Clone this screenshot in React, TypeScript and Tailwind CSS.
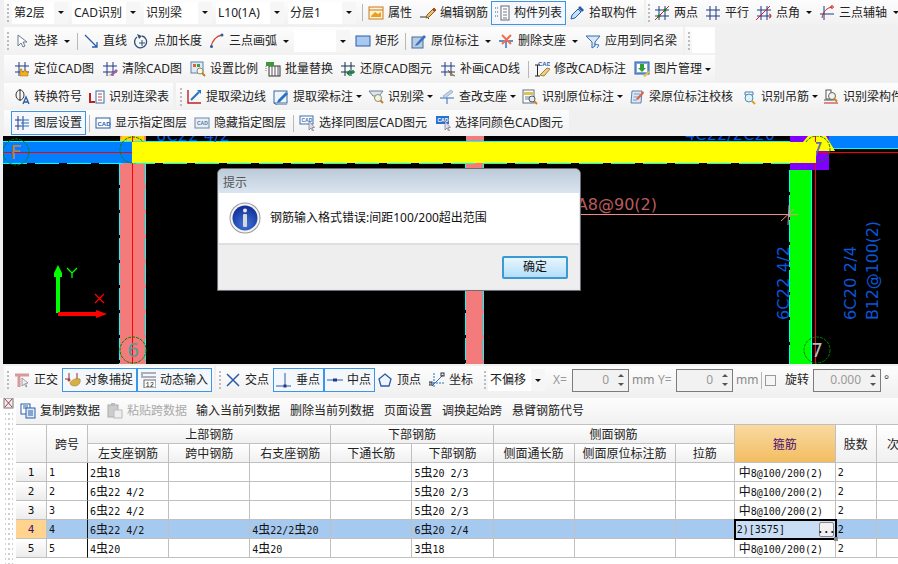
import type { ReactNode } from "react"

const NAVY = "#1f3a8a"

function Hash({ c = NAVY }: { c?: string }) {
  return <path d="M5 1v14M11 1v14M1 5h14M1 11h14" stroke={c} fill="none" />
}

const icons: Record<string, ReactNode> = {
  attr: (<><rect x="1" y="2" width="14" height="12" fill="#fff3d0" stroke="#c87a20" /><path d="M1 5h14" stroke="#c87a20" /><path d="M3 11l4-4 3 2 3-2v5H3z" fill="#e8a020" /></>),
  edit: (<><path d="M0 12h7l2 2" stroke="#333" fill="none" /><path d="M7 10l7-7 2 2-7 7-3 1z" fill="#e8c070" stroke="#8a6020" /><path d="M13 4l2 2" stroke="#c03020" strokeWidth="2" /></>),
  list: (<><rect x="7" y="1" width="8" height="14" fill="#fff" stroke="#667" /><path d="M9 4h4M9 7h4M9 10h4M9 13h4" stroke="#778" /><path d="M1 3h3M1 7h3M1 11h3" stroke="#556" strokeDasharray="1 1" /></>),
  dropper: (<><path d="M2 14l1-4 6-6 3 3-6 6z" fill="#bfe0f8" stroke="#2a5ca8" /><path d="M9 3l2-2 4 4-2 2z" fill="#2a5ca8" /></>),
  twoPt: (<><Hash /><path d="M1 15L15 1" stroke="#c02020" /><circle cx="5" cy="11" r="1.5" fill="#108010" /><circle cx="11" cy="5" r="1.5" fill="#108010" /></>),
  parallel: <Hash />,
  angle: (<><Hash /><path d="M0 15L14 1" stroke="#d02020" /><path d="M13 9a2 2 0 1 1 0 4" stroke="#d02020" fill="none" /></>),
  arc3: (<><path d="M5 1v14M1 9h14" stroke={NAVY} /><path d="M3 13C4 6 8 3 13 2" stroke="#d02020" fill="none" /><circle cx="13" cy="2" r="1.3" fill="none" stroke="#d02020" /></>),
  cursor: <path d="M4 2v11l3-3 2 4 2-1-2-4h4z" fill="#fff" stroke="#6a7a90" />,
  line: <path d="M2 2l12 12M14 9v5H9" stroke="#2a5ca8" fill="none" strokeWidth="1.3" />,
  ptLen: (<><path d="M3 4a6 6 0 1 0 5-1" stroke="#30507a" fill="none" strokeWidth="1.3" /><path d="M8 7v6M5 10h6" stroke="#30507a" /><path d="M3 1l5 2-3 3z" fill="#30507a" /></>),
  arc: (<><path d="M2 14C3 8 7 3 13 2" stroke="#d04030" fill="none" strokeWidth="1.4" /><circle cx="2.5" cy="13.5" r="1.5" fill="#2a5ca8" /><circle cx="13" cy="2" r="1.5" fill="#2a5ca8" /></>),
  rect: <rect x="1" y="3" width="14" height="10" fill="#a8c8f0" stroke="#2a5ca8" />,
  orig: (<><rect x="1" y="4" width="11" height="11" fill="#b8cce4" stroke="#4a6a9a" /><path d="M5 11l8-9 2 2-8 8-3 1z" fill="#3a70c0" /></>),
  del: (<><path d="M1 8h14M8 8v7" stroke="#2a6cc0" strokeWidth="1.4" /><path d="M4 2l9 9M13 2l-9 9" stroke="#f07050" strokeWidth="2" /></>),
  apply: (<><path d="M1 3h14l-5 6v4l-3 2V9z" fill="#d8e8f8" stroke="#3a6aa8" /><path d="M9 11l5 1-2 3" stroke="#2a80d0" fill="none" /></>),
  locate: (<><Hash /><path d="M6 15V8h2v3h2v-2h2v2h2v4z" fill="#f0b020" stroke="#a07010" strokeWidth=".5" /></>),
  clear: (<><Hash /><path d="M8 14l6-6 2 2-6 5z" fill="#a060a0" /><path d="M6 15l2-2 1 1z" fill="#e0b040" /></>),
  scale: (<><rect x="1" y="1" width="12" height="11" fill="#dfeaf8" stroke="#6080a8" /><rect x="3" y="3" width="3" height="3" fill="#e06030" /><rect x="7" y="3" width="3" height="3" fill="#40a040" /><circle cx="10" cy="10" r="3" fill="#fff8d0" stroke="#888" /><path d="M12 12l3 3" stroke="#c08020" strokeWidth="2" /></>),
  batch: (<><rect x="4" y="5" width="11" height="10" fill="#fff" stroke="#333" /><path d="M7 5v10M10 5v10M13 5v10" stroke="#555" /><rect x="1" y="1" width="8" height="4" fill="#3a9a3a" /><path d="M1 5v6" stroke="#777" strokeDasharray="1 1" /></>),
  restore: (<><Hash c="#10304a" /><path d="M7 12h6v-3M7 12l3-2.5M7 12l3 2.5" stroke="#108030" fill="none" strokeWidth="1.4" /></>),
  patch: (<><Hash /><path d="M8 9l3 3 4 3-4-1z" fill="#d0a040" stroke="#604010" strokeWidth=".5" /></>),
  modCad: (<><path d="M1 4h5M3.5 4v11M1 15h5" stroke="#222" /><text x="4" y="5" fontSize="6" fontWeight="700" fill="#2a5ca8" fontFamily="Liberation Sans">CAD</text><path d="M6 14l7-7 3 1-6 7z" fill="#f0d080" stroke="#a08030" /></>),
  image: (<><rect x="1" y="1" width="14" height="12" fill="#7aa8e0" stroke="#2a5ca8" /><rect x="3" y="3" width="10" height="8" fill="#fff" /><path d="M6 3h4v4h2l-4 4-4-4h2z" fill="#30a030" /><path d="M9 15l5-5 2 1-5 5z" fill="#e8c040" /></>),
  convert: (<><ellipse cx="6" cy="6" rx="4" ry="5" fill="none" stroke="#333" /><path d="M6 0v12" stroke="#333" /><path d="M9 15l3-7 3 7M10 13h4" stroke="#2a5ca8" fill="none" strokeWidth="1.3" /></>),
  lian: (<><path d="M1 4v9h5" stroke="#c02020" fill="none" strokeWidth="2" /><rect x="7" y="2" width="8" height="12" fill="#fff" stroke="#3a6aa8" /><path d="M9 5h4M9 8h4M9 11h4" stroke="#c04040" /></>),
  edge: (<><path d="M2 1v13h13" stroke="#c02020" fill="none" strokeWidth="1.4" /><path d="M5 11L13 3" stroke="#2a70c0" strokeWidth="2" /><path d="M11 1h4v4z" fill="#2a70c0" /></>),
  mark: (<><rect x="1" y="2" width="13" height="12" fill="#eef4fb" stroke="#406a9a" /><path d="M1 14l3 2h10" stroke="#406a9a" fill="none" /><path d="M5 11l8-8 2 2-8 8-3 1z" fill="#2a70c0" /></>),
  beam: (<><path d="M1 2h14l-4 5H5z" fill="#dce4ec" stroke="#708090" /><circle cx="10" cy="9" r="3.5" fill="#f8f4d8" stroke="#888" /><path d="M12.5 11.5L15 14" stroke="#c08020" strokeWidth="2" /></>),
  check: (<><path d="M1 9h14M8 9v6" stroke="#2a6cc0" /><path d="M4 7l8-6 2 2-8 6z" fill="#c8d4e4" stroke="#6080a0" strokeWidth=".5" /></>),
  origin: (<><rect x="1" y="1" width="11" height="13" fill="#fff" stroke="#607080" /><path d="M2 3h9v3H2z" fill="#e0c050" /><path d="M3 8h6M3 10h5" stroke="#6080a0" /><circle cx="10" cy="10" r="3" fill="#dcecf8" stroke="#555" /><path d="M12 12l3 3" stroke="#d08020" strokeWidth="2" /></>),
  verify: (<><path d="M3 2h10l-1 12H2z" fill="#dce8f4" stroke="#5a80b0" /><path d="M5 5h6M4.500 8h6M4 11h4" stroke="#7a9ac0" /><path d="M7 10l7-8 1 2-6 7z" fill="#e06040" /></>),
  hanger: (<><path d="M4 3h8v3H4z" fill="none" stroke="#4a7ab0" /><circle cx="8" cy="9" r="4" fill="#dff0f8" stroke="#4a90b0" /><path d="M11 12l3 3" stroke="#e0a020" strokeWidth="2" /></>),
  beamPart: (<><path d="M1 14h14" stroke="#c02020" /><path d="M1 11h10" stroke="#555" /><rect x="3" y="1" width="5" height="9" fill="#fff" stroke="#555" /><circle cx="9" cy="7" r="3.500" fill="#f4f4e4" stroke="#666" /><path d="M11 9.500l3 3" stroke="#c08020" strokeWidth="2" /></>),
  layer: (<><path d="M4 1v14M9 1v14" stroke={NAVY} /><path d="M1 5h6M1 11h6" stroke={NAVY} /><path d="M7 5h8M7 8h8M7 11h8" stroke="#2a70c0" /></>),
  showCad: (<><rect x="1" y="3" width="14" height="10" fill="#fff" stroke="#2a5ca8" /><text x="2.500" y="10.500" fontSize="6" fontWeight="700" fill="#2a5ca8" fontFamily="Liberation Sans">CAD</text></>),
  hideCad: (<><rect x="1" y="3" width="14" height="10" fill="#e8eef6" stroke="#6a8ab0" /><text x="3" y="10" fontSize="5" fontWeight="700" fill="#5a7aa0" fontFamily="Liberation Sans">CAD</text></>),
  selCad: (<><rect x="1" y="1" width="13" height="8" fill="#fff" stroke="#3a70b0" /><text x="2.500" y="7" fontSize="5" fontWeight="700" fill="#3a70b0" fontFamily="Liberation Sans">CAD</text><path d="M10 6v9l2-2 1.500 3 1-.5-1.500-3h2.500z" fill="#dde" stroke="#667" strokeWidth=".6" /></>),
  selColor: (<><rect x="1" y="1" width="13" height="8" fill="#2a70d0" /><text x="2.500" y="7" fontSize="5" fontWeight="700" fill="#fff" fontFamily="Liberation Sans">CAD</text><path d="M10 6v9l2-2 1.500 3 1-.5-1.500-3h2.500z" fill="#dde" stroke="#667" strokeWidth=".6" /></>),
  ortho: (<><path d="M1 3h14M5 3v12" stroke="#d89a98" strokeWidth="3" /><path d="M8 6l6 5-2.500.5 1.500 3-1 .5-1.500-3L8 14z" fill="#eee" stroke="#667" strokeWidth=".6" /></>),
  snap: (<><path d="M0 7h5M4 1v7M12 1v7" stroke="#8a3030" /><circle cx="4" cy="8" r="1.500" fill="#c04030" /><path d="M5 11c2-4 7-5 10-4 1 3-1 7-5 7-3 0-5-1-5-3z" fill="#d8b040" stroke="#907020" strokeWidth=".5" /></>),
  dyn: (<><path d="M1 1h15M1 5h15" stroke="#667" /><path d="M1 3h2" stroke="#667" /><rect x="4" y="8" width="12" height="8" fill="#fff" stroke="#667" /><text x="5.500" y="15" fontSize="7" fill="#222" fontFamily="Liberation Mono">12</text></>),
  cross: <path d="M2 2l12 12M14 2L2 14" stroke="#2a5ca8" strokeWidth="1.500" />,
  perp: (<><path d="M0 14h15M9 1v13" stroke="#2a5ca8" /><rect x="7.500" y="12.500" width="3" height="3" fill="#1f3a8a" /></>),
  mid: (<><path d="M0 8h16" stroke="#2a5ca8" /><rect x="6" y="6.500" width="4" height="3" fill="#1f3a8a" /></>),
  vertex: <path d="M8 2l6 5-2 7H4L2 7z" fill="#eef4fb" stroke="#2a5ca8" strokeWidth="1.300" />,
  coord: (<><path d="M5 1v14M1 11h14" stroke="#2a70c0" strokeDasharray="2 1" /><path d="M3 14L14 3" stroke="#2a70c0" /><rect x="0" y="10" width="3" height="3" fill="none" stroke="#333" /><rect x="12" y="1" width="3" height="3" fill="none" stroke="#333" /></>),
  copy: (<><rect x="1" y="1" width="9" height="10" fill="#fff" stroke="#2a5ca8" /><path d="M3 3h5M3 5h5" stroke="#2a5ca8" /><rect x="6" y="5" width="9" height="10" fill="#dfeaf8" stroke="#2a5ca8" /><path d="M8 8h5M8 10h5M8 12h5" stroke="#2a5ca8" /></>),
  paste: (<><rect x="1" y="2" width="10" height="12" fill="#ccc" stroke="#aaa" /><rect x="4" y="0" width="4" height="3" fill="#bbb" /><rect x="7" y="7" width="8" height="8" fill="#eee" stroke="#bbb" /></>),
}

function Icon({ name }: { name: string }) {
  return (
    <svg width="16" height="16" viewBox="0 0 16 16" className="shrink-0">
      {icons[name]}
    </svg>
  )
}

function Arrow({ className = "" }: { className?: string }) {
  return <span className={`inline-block shrink-0 border-x-[3px] border-t-[3px] border-x-transparent border-t-[#111] ${className}`} />
}

function Grip({ className = "" }: { className?: string }) {
  return (
    <div className={`flex w-[2px] shrink-0 flex-col gap-[2px] ${className}`}>
      <span className="h-[2px] bg-[#bcbcbc]" />
      <span className="h-[2px] bg-[#bcbcbc]" />
      <span className="h-[2px] bg-[#bcbcbc]" />
      <span className="h-[2px] bg-[#bcbcbc]" />
      <span className="h-[2px] bg-[#bcbcbc]" />
    </div>
  )
}

function Sep({ className = "" }: { className?: string }) {
  return <div className={`h-[17px] w-px shrink-0 bg-[#b8b8b8] ${className}`} />
}

function Tool(props: { icon: string; label: string; className: string; arrow?: "near" | "far"; on?: boolean }) {
  const on = props.on ? "h-[24px] border border-[#3d95e6] bg-[#f4f8fc] pl-[2px]" : ""
  return (
    <div className={`flex shrink-0 items-center gap-[4px] whitespace-nowrap ${on} ${props.className}`}>
      <Icon name={props.icon} />
      <span>{props.label}</span>
      {props.arrow === "near" && <Arrow className="ml-[-1px]" />}
      {props.arrow === "far" && <Arrow className="ml-[2px]" />}
    </div>
  )
}

function Combo({ label, className }: { label: string; className: string }) {
  return (
    <div className={`flex h-[22px] shrink-0 items-center justify-between bg-white pl-[2px] ${className}`}>
      <span className="whitespace-nowrap">{label}</span>
      <span className="flex h-full w-[14px] items-center justify-center bg-[#f6f6f6]">
        <Arrow />
      </span>
    </div>
  )
}

function Spin({ value, className }: { value: string; className: string }) {
  return (
    <div className={`flex h-[23px] shrink-0 items-center justify-end border border-[#7c7c7c] bg-[#f2f2f2] text-[#9a9a9a] ${className}`}>
      <span>{value}</span>
      <span className="ml-[9px] mr-[4px] flex w-[6px] flex-col items-center gap-[6px]">
        <span className="border-x-[3px] border-b-[3px] border-x-transparent border-b-[#555]" />
        <span className="border-x-[3px] border-t-[3px] border-x-transparent border-t-[#555]" />
      </span>
    </div>
  )
}

const strip = "bg-gradient-to-b from-[#fdfdfd] to-[#f1f1f1]"

function Toolbars() {
  return (
    <div className="text-[12px] leading-[16px] text-[#222]">
      <div className="flex h-[27px] pl-[4px]">
        <div className={`flex h-[25px] w-[640px] shrink-0 items-center pl-[3px] ${strip}`}>
          <Grip />
          <Combo label="第2层" className="ml-[3px] w-[56px]" />
          <Combo label="CAD识别" className="ml-[4px] w-[68px]" />
          <Combo label="识别梁" className="ml-[4px] w-[68px]" />
          <Combo label="L10(1A)" className="ml-[4px] w-[68px]" />
          <Combo label="分层1" className="ml-[4px] w-[68px]" />
          <Sep className="ml-[6px]" />
          <Tool icon="attr" label="属性" className="ml-[5px] w-[52px]" />
          <Tool icon="edit" label="编辑钢筋" className="w-[71px]" />
          <Tool icon="list" label="构件列表" className="w-[75px]" on />
          <Tool icon="dropper" label="拾取构件" className="ml-[3px] w-[70px]" />
        </div>
        <div className={`ml-[2px] flex h-[25px] flex-1 items-center overflow-hidden pl-[2px] ${strip}`}>
          <Grip />
          <Tool icon="twoPt" label="两点" className="ml-[4px] w-[51px]" />
          <Tool icon="parallel" label="平行" className="w-[51px]" />
          <Tool icon="angle" label="点角" className="w-[63px]" arrow="far" />
          <Tool icon="arc3" label="三点辅轴" className="w-[79px]" arrow="far" />
        </div>
      </div>

      <div className="flex h-[28px] pl-[4px]">
        <div className={`flex w-[679px] shrink-0 items-center pl-[3px] ${strip}`}>
          <Grip />
          <Tool icon="cursor" label="选择" className="ml-[5px] w-[63px]" arrow="far" />
          <Sep />
          <Tool icon="line" label="直线" className="ml-[5px] w-[51px]" />
          <Tool icon="ptLen" label="点加长度" className="w-[75px]" />
          <Tool icon="arc" label="三点画弧" className="w-[85px]" arrow="far" />
          <Combo label="" className="w-[56px]" />
          <Tool icon="rect" label="矩形" className="ml-[5px] w-[50px]" />
          <Sep />
          <Tool icon="orig" label="原位标注" className="ml-[5px] w-[87px]" arrow="far" />
          <Tool icon="del" label="删除支座" className="w-[87px]" arrow="far" />
          <Tool icon="apply" label="应用到同名梁" className="w-[93px]" />
        </div>
        <div className={`ml-[2px] flex w-[30px] items-center pl-[3px] ${strip}`}>
          <Grip />
          <div className="ml-[2px] h-[24px] flex-1 bg-white" />
        </div>
      </div>

      <div className="flex h-[28px] pl-[4px]">
        <div className={`flex w-[711px] shrink-0 items-center pl-[10px] ${strip}`}>
          <Tool icon="locate" label="定位CAD图" className="w-[88px]" />
          <Tool icon="clear" label="清除CAD图" className="w-[88px]" />
          <Tool icon="scale" label="设置比例" className="w-[75px]" />
          <Tool icon="batch" label="批量替换" className="w-[75px]" />
          <Tool icon="restore" label="还原CAD图元" className="w-[100px]" />
          <Tool icon="patch" label="补画CAD线" className="w-[88px]" />
          <Sep />
          <Tool icon="modCad" label="修改CAD标注" className="ml-[5px] w-[100px]" />
          <Tool icon="image" label="图片管理" className="w-[80px]" arrow="near" />
        </div>
      </div>

      <div className="flex h-[27px] pl-[4px]">
        <div className={`flex w-[169px] shrink-0 items-center pl-[10px] ${strip}`}>
          <Tool icon="convert" label="转换符号" className="w-[75px]" />
          <Tool icon="lian" label="识别连梁表" className="w-[84px]" />
        </div>
        <div className={`ml-[3px] flex flex-1 items-center overflow-hidden pl-[4px] ${strip}`}>
          <Grip />
          <Tool icon="edge" label="提取梁边线" className="ml-[4px] w-[87px]" />
          <Tool icon="mark" label="提取梁标注" className="w-[95px]" arrow="near" />
          <Tool icon="beam" label="识别梁" className="w-[71px]" arrow="near" />
          <Tool icon="check" label="查改支座" className="w-[83px]" arrow="near" />
          <Tool icon="origin" label="识别原位标注" className="w-[107px]" arrow="near" />
          <Tool icon="verify" label="梁原位标注校核" className="w-[112px]" />
          <Tool icon="hanger" label="识别吊筋" className="w-[82px]" arrow="near" />
          <Tool icon="beamPart" label="识别梁构件" className="w-[80px]" />
        </div>
      </div>

      <div className="flex h-[26px] pl-[4px]">
        <div className={`flex w-[565px] shrink-0 items-center pl-[7px] ${strip}`}>
          <Tool icon="layer" label="图层设置" className="w-[75px]" on />
          <Sep className="ml-[3px]" />
          <Tool icon="showCad" label="显示指定图层" className="ml-[5px] w-[99px]" />
          <Tool icon="hideCad" label="隐藏指定图层" className="w-[99px]" />
          <Sep />
          <Tool icon="selCad" label="选择同图层CAD图元" className="ml-[5px] w-[136px]" />
          <Tool icon="selColor" label="选择同颜色CAD图元" className="w-[130px]" />
        </div>
      </div>
    </div>
  )
}

function InfoIcon() {
  return (
    <svg width="32" height="32" viewBox="0 0 32 32">
      <defs>
        <radialGradient id="infoBlue" cx="50%" cy="75%" r="70%">
          <stop offset="0" stopColor="#3f74d8" />
          <stop offset="1" stopColor="#12309a" />
        </radialGradient>
      </defs>
      <circle cx="16" cy="16" r="15.500" fill="#9a9a9a" />
      <circle cx="16" cy="16" r="14.500" fill="#f4f4f4" />
      <circle cx="16" cy="16" r="12.500" fill="url(#infoBlue)" />
      <circle cx="16" cy="8.500" r="2" fill="#e8e8e8" />
      <rect x="14" y="12" width="4" height="13" rx="1" fill="#d8d8d8" />
    </svg>
  )
}

function Dialog() {
  return (
    <div className="absolute left-[214px] top-[32px] w-[364px] rounded-t-[6px] border border-[#6f6f6f] bg-[#e3e9f2] text-[12px] leading-[16px]">
      <div className="flex h-[24px] items-center rounded-t-[5px] bg-gradient-to-b from-[#bccad9] to-[#dae5f0] pl-[5px] pt-[3px] text-[#555]">提示</div>
      <div className="mx-[1px] flex h-[52px] items-center border-b-2 border-[#dfdfdf] bg-white pl-[10px] text-[#111]">
        <InfoIcon />
        <span className="ml-[9px]">钢筋输入格式错误:间距100/200超出范围</span>
      </div>
      <div className="mx-[1px] mb-[1px] flex h-[44px] items-center justify-end bg-[#eeeeee] pr-[11px]">
        <div className="flex h-[23px] w-[66px] items-center justify-center rounded-[2px] border-2 border-[#3a9ad4] bg-gradient-to-b from-[#e8f6fd] to-[#b5defa] text-[#111]">确定</div>
      </div>
    </div>
  )
}

function AxisBubble({ x, y, label, color }: { x: number; y: number; label: string; color: string }) {
  return (
    <>
      <circle cx={x} cy={y} r="13" fill="none" stroke="#008000" strokeDasharray="3 1" />
      <text x={x} y={y + 7} textAnchor="middle" fontSize="19" fill={color} fontFamily="DejaVu Sans">{label}</text>
    </>
  )
}

function Drawing() {
  const cyan = "#00ffff"
  return (
    <svg width="895" height="228" viewBox="3 136 895 228" className="block">
      <rect x="3" y="136" width="895" height="228" fill="#000" />
      {/* beams and columns */}
      <rect x="120" y="136" width="26" height="228" fill="#f47b7b" />
      <rect x="466" y="136" width="18" height="228" fill="#f47b7b" />
      <path d="M119.500 163v201M145.500 163v201M465.500 163v201M483.500 163v201" stroke={cyan} strokeDasharray="22 3" />
      <path d="M115 152l7-16h22l2 16z" fill="#ffd200" />
      <rect x="3" y="141" width="129" height="22" fill="#0080ff" />
      <rect x="132" y="142" width="684" height="21" fill="#ffff00" />
      <path d="M3 141.500h129M132 141.500h684M829 148.500h69" stroke={cyan} />
      <path d="M3 163.500h810" stroke={cyan} strokeDasharray="24 8" />
      <rect x="790" y="136" width="39" height="34" fill="#8000ff" />
      <rect x="790" y="142" width="26" height="21" fill="#ffff00" />
      <rect x="829" y="136" width="69" height="12" fill="#0080ff" />
      <path d="M803 142l5-6h18l9 15h-19v-9z" fill="#ffff00" />
      <rect x="790" y="170" width="21" height="194" fill="#00ff00" />
      <path d="M789.500 170v194" stroke={cyan} strokeDasharray="22 3" />
      <path d="M811.500 170v194" stroke={cyan} />
      {/* grid lines */}
      <path d="M3 152.500h129M132.500 136v228M815.500 136v228M816 152.500h82" stroke="#ff0000" />
      <path d="M560 214.500h238M789 205l-1 20M781 221l13-12" stroke="#f08a8a" />
      <AxisBubble x={16} y={152} label="F" color="#c08048" />
      <AxisBubble x={133} y={150} label="" color="#888" />
      <AxisBubble x={133} y={350} label="6" color="#5a9a9a" />
      <AxisBubble x={817} y={149} label="7" color="#6a6aaa" />
      <AxisBubble x={817} y={350} label="7" color="#b8b8b8" />
      {/* annotations */}
      <g fontFamily="DejaVu Sans" fontSize="16" fill="#0a55d8">
        <text x="156" y="141" textLength="74">6C22 4/2</text>
        <text x="685" y="140" textLength="90">4C22/2C20</text>
        <text transform="translate(789 320) rotate(-90)" textLength="74">6C22 4/2</text>
        <text transform="translate(856 320) rotate(-90)" textLength="74">6C20 2/4</text>
        <text transform="translate(878 320) rotate(-90)" textLength="99">B12@100(2)</text>
      </g>
      <rect x="132" y="142" width="684" height="21" fill="#ffff00" />
      <text x="657" y="210" textAnchor="end" fontFamily="DejaVu Sans" fontSize="16" fill="#b85c5c">A8@90(2)</text>
      {/* ucs marker */}
      <path d="M58 313v-44" stroke="#00ff00" strokeWidth="4" />
      <path d="M58 265l4 8 0 4h-8v-4z" fill="#00ff00" />
      <path d="M58 314h44" stroke="#ff0000" strokeWidth="4" />
      <path d="M107 314l-11 4v-8z" fill="#ff0000" />
      <path d="M67 268l5 5 5-5M72 273v5" stroke="#00ff00" fill="none" strokeWidth="1.300" />
      <path d="M95 294l9 9M104 294l-9 9" stroke="#ff0000" strokeWidth="1.300" />
    </svg>
  )
}

function SnapBar() {
  return (
    <div className="flex h-[34px] pb-[4px] pl-[4px] pt-[2px] text-[12px] leading-[16px] text-[#222]">
      <div className={`flex w-[210px] shrink-0 items-center pl-[3px] ${strip}`}>
        <Grip />
        <Tool icon="ortho" label="正交" className="ml-[5px] w-[48px]" />
        <Tool icon="snap" label="对象捕捉" className="w-[75px]" on />
        <Tool icon="dyn" label="动态输入" className="w-[75px]" on />
      </div>
      <div className={`ml-[2px] flex flex-1 items-center pl-[3px] ${strip}`}>
        <Grip />
        <Tool icon="cross" label="交点" className="ml-[4px] w-[48px]" />
        <Tool icon="perp" label="垂点" className="w-[51px]" on />
        <Tool icon="mid" label="中点" className="w-[51px]" on />
        <Tool icon="vertex" label="顶点" className="ml-[2px] w-[52px]" />
        <Tool icon="coord" label="坐标" className="w-[52px]" />
        <Grip className="ml-[3px]" />
        <Combo label="不偏移" className="ml-[2px] w-[57px]" />
        <span className="ml-[8px] w-[19px] text-[#999]">X=</span>
        <Spin value="0" className="w-[57px]" />
        <span className="ml-[3px] w-[26px] text-[#888]">mm</span>
        <span className="w-[18px] text-[#999]">Y=</span>
        <Spin value="0" className="w-[57px]" />
        <span className="ml-[3px] w-[25px] text-[#888]">mm</span>
        <Sep />
        <span className="ml-[3px] h-[11px] w-[11px] border border-[#999] bg-[#f6f6f6]" />
        <span className="ml-[9px]">旋转</span>
        <Spin value="0.000" className="ml-[4px] w-[68px]" />
        <span className="ml-[3px] text-[#555]">°</span>
      </div>
    </div>
  )
}

function TableBar() {
  return (
    <div className={`flex h-[26px] items-center pl-[4px] text-[12px] leading-[16px] text-[#222] ${strip}`}>
      <Tool icon="copy" label="复制跨数据" className="w-[87px]" />
      <Tool icon="paste" label="粘贴跨数据" className="w-[89px] text-[#aaa]" />
      <span className="w-[94px] shrink-0">输入当前列数据</span>
      <span className="w-[94px] shrink-0">删除当前列数据</span>
      <span className="w-[58px] shrink-0">页面设置</span>
      <span className="w-[70px] shrink-0">调换起始跨</span>
      <span className="shrink-0">悬臂钢筋代号</span>
    </div>
  )
}

function Rebar({ text }: { text: string }) {
  // the rebar grade glyphs are wider than the digits around them
  return (
    <>
      {text.split(/([虫中])/).map((part, i) =>
        part === "虫" || part === "中" ? (
          <span key={i} className="text-[12px] leading-[12px]" style={{ fontFamily: "Noto Sans CJK SC" }}>{part}</span>
        ) : (
          <span key={i}>{part}</span>
        ),
      )}
    </>
  )
}

const rows = [
  { id: 1, top1: "2虫18", top3: "", bottom: "5虫20 2/3" },
  { id: 2, top1: "6虫22 4/2", top3: "", bottom: "5虫20 2/3" },
  { id: 3, top1: "6虫22 4/2", top3: "", bottom: "5虫20 2/3" },
  { id: 4, top1: "6虫22 4/2", top3: "4虫22/2虫20", bottom: "6虫20 2/4" },
  { id: 5, top1: "4虫20", top3: "4虫20", bottom: "3虫18" },
]

const th = "border-r border-b border-[#c0c0c0] bg-gradient-to-b from-white to-[#f0f0f0] p-0 pt-[2px] text-center font-normal"
const td = "border-r border-b border-[#c0c0c0] p-0 pl-[2px] pt-[1px] text-left whitespace-pre"

function BeamTable() {
  return (
    <div className="flex-1 overflow-hidden">
      <table className="w-[894px] table-fixed border-separate border-spacing-0 text-[12px] leading-[16px] text-[#222]">
        <colgroup>
          <col className="w-[31px]" />
          <col className="w-[41px]" />
          <col className="w-[81px]" />
          <col className="w-[81px]" />
          <col className="w-[81px]" />
          <col className="w-[81px]" />
          <col className="w-[81px]" />
          <col className="w-[81px]" />
          <col className="w-[101px]" />
          <col className="w-[59px]" />
          <col className="w-[101px]" />
          <col className="w-[41px]" />
          <col className="w-[33px]" />
        </colgroup>
        <thead>
          <tr className="h-[20px]">
            <th rowSpan={2} className={`${th} border-t`} />
            <th rowSpan={2} className={`${th} border-t`}>跨号</th>
            <th colSpan={3} className={`${th} border-t`}>上部钢筋</th>
            <th colSpan={2} className={`${th} border-t`}>下部钢筋</th>
            <th colSpan={3} className={`${th} border-t`}>侧面钢筋</th>
            <th rowSpan={2} className="border-r border-b border-t border-[#c0c0c0] bg-gradient-to-b from-[#f9daa0] to-[#f2bd60] p-0 pt-[2px] text-center font-normal text-[#4b0f70]">箍筋</th>
            <th rowSpan={2} className={`${th} border-t`}>肢数</th>
            <th rowSpan={2} className={`${th} border-t`}>次</th>
          </tr>
          <tr className="h-[19px]">
            <th className={th}>左支座钢筋</th>
            <th className={th}>跨中钢筋</th>
            <th className={th}>右支座钢筋</th>
            <th className={th}>下通长筋</th>
            <th className={th}>下部钢筋</th>
            <th className={th}>侧面通长筋</th>
            <th className={th}>侧面原位标注筋</th>
            <th className={th}>拉筋</th>
          </tr>
        </thead>
        <tbody className="font-['DejaVu_Sans_Mono','Noto_Sans_CJK_SC',monospace] text-[10px] leading-[12px] text-[#111]">
          {rows.map((r) => {
            const active = r.id === 4
            const bg = active ? "bg-[#a6c9ef]" : "bg-white"
            return (
              <tr key={r.id} className="h-[19px]">
                <td className={`border-r border-b border-[#c0c0c0] p-0 pt-[1px] text-center text-[11px] ${active ? "bg-[#ffd48f] text-[#4b0f70]" : "bg-gradient-to-b from-white to-[#ececec]"}`}>{r.id}</td>
                <td className={`border-r border-b border-r-[#111] border-b-[#c0c0c0] p-0 pl-[2px] pt-[1px] ${bg}`}>{r.id}</td>
                <td className={`${td} ${bg}`}><Rebar text={r.top1} /></td>
                <td className={`${td} ${bg}`} />
                <td className={`${td} ${bg}`}><Rebar text={r.top3} /></td>
                <td className={`${td} ${bg}`} />
                <td className={`${td} ${bg}`}><Rebar text={r.bottom} /></td>
                <td className={`${td} ${bg}`} />
                <td className={`${td} ${bg}`} />
                <td className={`${td} ${bg}`} />
                {active ? (
                  <td className={`${td} relative ${bg}`}>
                    <div className="absolute -left-[1px] -top-[1px] flex h-[21px] w-[103px] items-center border-2 border-black bg-[#c9ddf5] pl-[1px]">
                      2)[3575]
                      <span className="absolute right-[1px] top-[1px] flex h-[15px] w-[15px] items-center justify-center rounded-[2px] border border-[#888] bg-[#f2f2f2] font-bold leading-none">...</span>
                    </div>
                    <span className="absolute -bottom-[3px] -right-[3px] h-[4px] w-[4px] bg-[#888]" />
                  </td>
                ) : (
                  <td className={`${td} ${bg} pl-[4px]`}><Rebar text="中8@100/200(2)" /></td>
                )}
                <td className={`${td} ${bg}`}>2</td>
                <td className={`border-b border-[#c0c0c0] p-0 ${bg}`} />
              </tr>
            )
          })}
        </tbody>
      </table>
    </div>
  )
}

function Gutter() {
  return (
    <div className="flex w-[16px] shrink-0 flex-col">
      <svg width="16" height="166" viewBox="0 0 16 166">
        <defs>
          <pattern id="gutterDots" width="4" height="5" patternUnits="userSpaceOnUse">
            <rect x="0" y="0" width="2" height="2" fill="#cfcfcf" />
          </pattern>
        </defs>
        <rect x="4" y="0" width="9" height="10" fill="#f4eef0" stroke="#777" />
        <path d="M5 1l7 8M12 1L5 9" stroke="#a04050" />
        <rect x="5" y="14" width="8" height="152" fill="url(#gutterDots)" />
      </svg>
    </div>
  )
}

export default function App() {
  return (
    <div className="h-[564px] w-[898px] overflow-hidden bg-[#f0f0f0] font-['Noto_Sans','Noto_Sans_CJK_SC',sans-serif]">
      <Toolbars />
      <div className="relative ml-[3px] h-[228px] overflow-hidden">
        <Drawing />
        <Dialog />
      </div>
      <SnapBar />
      <div className="flex bg-white">
        <Gutter />
        <div className="flex h-[166px] flex-1 flex-col overflow-hidden">
          <TableBar />
          <BeamTable />
        </div>
      </div>
    </div>
  )
}
